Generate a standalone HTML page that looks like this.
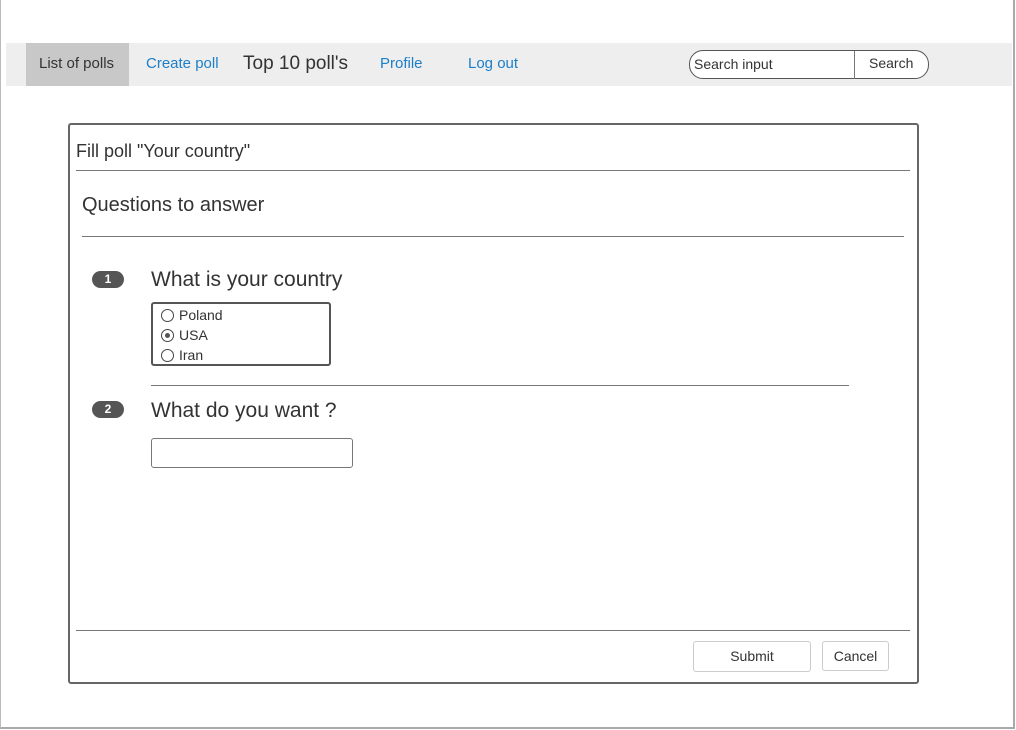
<!DOCTYPE html>
<html><head><meta charset="utf-8"><style>
*{margin:0;padding:0;box-sizing:border-box}
body{width:1016px;height:730px;background:#fff;position:relative;overflow:hidden;font-family:"Liberation Sans",sans-serif;color:#333}
.a{position:absolute}
.frame{left:0;top:0;width:1015px;height:729px;border-right:2px solid #aaa;border-bottom:2px solid #aaa;border-left:1px solid #bbb}
.nav{left:6px;top:43px;width:1006px;height:43px;background:#eeeeee}
.sel{left:26px;top:43px;width:103px;height:43px;background:#c8c8c8}
.n{top:55px;font-size:15px;white-space:nowrap}
.blue{color:#1b7fc9}
.panel{left:68px;top:123px;width:851px;height:561px;border:2px solid #666;border-radius:3px}
.hr{height:1px;background:#777}
.badge{width:32px;height:17px;border-radius:9px;background:#555;color:#fff;font-size:12px;font-weight:bold;text-align:center;line-height:17px}
.radio{width:13px;height:13px;border:1px solid #444;border-radius:50%;display:inline-block;vertical-align:-2px;margin-right:5px;position:relative}
.btn{border:1px solid #ccc;border-radius:3px;font-size:14px;text-align:center}
</style></head><body>
<div class="a frame"></div>
<div class="a nav"></div>
<div class="a sel"></div>
<div class="a n" style="left:39px">List of polls</div>
<div class="a n blue" style="left:146px">Create poll</div>
<div class="a n" style="left:243px;font-size:19px;top:53px">Top 10 poll's</div>
<div class="a n blue" style="left:380px">Profile</div>
<div class="a n blue" style="left:468px">Log out</div>
<div class="a" style="left:689px;top:50px;width:240px;height:29px;border:1px solid #555;border-radius:14px;background:#fff"></div>
<div class="a" style="left:854px;top:51px;width:1px;height:28px;background:#777"></div>
<div class="a n" style="left:694px;top:56px;font-size:14px">Search input</div>
<div class="a n" style="left:869px;top:55px;font-size:14px">Search</div>
<div class="a panel"></div>
<div class="a" style="left:76px;top:141px;font-size:18px">Fill poll "Your country"</div>
<div class="a hr" style="left:76px;top:170px;width:834px"></div>
<div class="a" style="left:82px;top:194px;font-size:20px">Questions to answer</div>
<div class="a hr" style="left:82px;top:236px;width:822px"></div>
<div class="a badge" style="left:92px;top:271px">1</div>
<div class="a" style="left:151px;top:268px;font-size:21px">What is your country</div>
<div class="a" style="left:151px;top:302px;width:180px;height:64px;border:2px solid #555;border-radius:3px"></div>
<div class="a" style="left:161px;top:305px;font-size:14px;line-height:20px">
<div><span class="radio"></span>Poland</div>
<div><span class="radio"><span style="position:absolute;left:3px;top:3px;width:5px;height:5px;border-radius:50%;background:#555"></span></span>USA</div>
<div><span class="radio"></span>Iran</div></div>
<div class="a hr" style="left:151px;top:385px;width:698px"></div>
<div class="a badge" style="left:92px;top:401px">2</div>
<div class="a" style="left:151px;top:399px;font-size:21px">What do you want ?</div>
<div class="a" style="left:151px;top:438px;width:202px;height:30px;border:1px solid #777;border-radius:3px"></div>
<div class="a hr" style="left:76px;top:630px;width:834px"></div>
<div class="a btn" style="left:693px;top:641px;width:118px;height:31px;line-height:29px">Submit</div>
<div class="a btn" style="left:822px;top:641px;width:67px;height:30px;line-height:28px">Cancel</div>
</body></html>
